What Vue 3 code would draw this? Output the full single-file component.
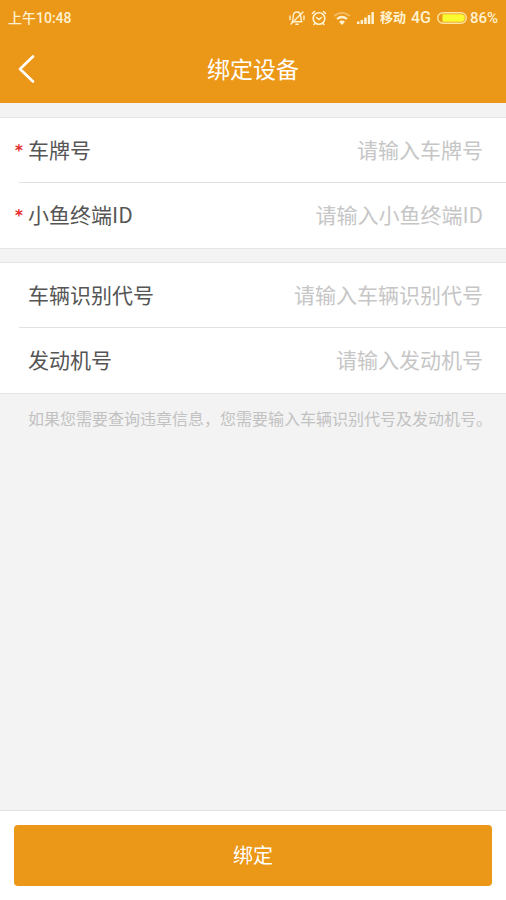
<script setup>
import { reactive } from 'vue'

const groups = [
  [
    { id: 'plate', label: '车牌号', required: true },
    { id: 'terminal', label: '小鱼终端ID', required: true }
  ],
  [
    { id: 'vin', label: '车辆识别代号', required: false },
    { id: 'engine', label: '发动机号', required: false }
  ]
]

const form = reactive({ plate: '', terminal: '', vin: '', engine: '' })
</script>

<template>
  <form class="page" @submit.prevent>
    <header class="header">
      <div class="status">
        <span class="time">上午10:48</span>
        <div class="indicators">
          <svg class="icon" width="16" height="16" viewBox="0 0 16 16" fill="none" stroke="currentColor" stroke-width="1.400" stroke-linecap="round" stroke-linejoin="round" aria-hidden="true">
            <path d="M3 11.800h10c-1-1-1.200-2-1.200-5C11.800 4 10.200 2 8 2S4.200 4 4.200 6.800c0 3-.2 4-1.200 5z" />
            <path d="M6.800 14.200h2.400M14 2L2 14M1 6v3.500M15 6v3.500" />
          </svg>
          <svg class="icon" width="16" height="16" viewBox="0 0 16 16" fill="none" stroke="currentColor" stroke-width="1.600" stroke-linecap="round" aria-hidden="true">
            <circle cx="8" cy="8.500" r="5.800" />
            <path d="M5.500 7.500L8 9.500l2.500-2" />
            <path d="M1.500 3.500l2-2M14.500 3.500l-2-2M4 13.500l-1 1M12 13.500l1 1" />
          </svg>
          <svg class="icon" width="18" height="14" viewBox="0 0 18 14" fill="none" stroke="currentColor" aria-hidden="true">
            <path d="M1.200 5Q9-1.500 16.800 5" stroke-width="2" opacity=".4" />
            <path d="M4 8Q9 4 14 8" stroke-width="2.200" />
            <path d="M6 10.700Q9 8.300 12 10.700L9 14z" fill="currentColor" stroke="none" />
          </svg>
          <svg class="icon" width="17" height="12" viewBox="0 0 17 12" fill="currentColor" aria-hidden="true">
            <path d="M0 9.500h2.500V12H0zM3.600 8h2.500v4H3.600zM7.200 5.500h2.500V12H7.200zM10.800 3h2.500v9h-2.500zM14.400 0h2.500v12h-2.500z" />
          </svg>
          <span class="carrier">移动<span class="latin">4G</span></span>
          <svg class="icon" width="30" height="12" viewBox="0 0 30 12" aria-hidden="true">
            <rect x=".7" y=".7" width="28.600" height="10.600" rx="5.300" fill="none" stroke="#ffe5a0" stroke-width="1.400" />
            <path d="M5.500 2.200H24a3.800 3.800 0 0 1 0 7.600H5.500z" fill="#fbfb32" />
          </svg>
          <span class="percent">86%</span>
        </div>
      </div>
      <nav class="bar">
        <button class="back" type="button" aria-label="返回">
          <svg width="18" height="28" viewBox="0 0 18 28" fill="none" stroke="currentColor" stroke-width="2.600" stroke-linecap="round" stroke-linejoin="round" aria-hidden="true">
            <path d="M15 1.500L2 14l13 12.500" />
          </svg>
        </button>
        <h1 class="title">绑定设备</h1>
      </nav>
    </header>

    <main class="content">
      <section v-for="(group, g) in groups" :key="g" class="group">
        <template v-for="(field, i) in group" :key="field.id">
          <hr v-if="i > 0" class="divider" />
          <div class="row">
            <span class="mark">{{ field.required ? '*' : '' }}</span>
            <label class="label" :for="field.id">{{ field.label }}</label>
            <input
              :id="field.id"
              v-model="form[field.id]"
              class="input"
              type="text"
              :required="field.required"
              :placeholder="'请输入' + field.label"
            />
          </div>
        </template>
      </section>
      <p class="hint">如果您需要查询违章信息，您需要输入车辆识别代号及发动机号。</p>
    </main>

    <footer class="footer">
      <button class="submit" type="submit">绑定</button>
    </footer>
  </form>
</template>

<style>
body {
  margin: 0;
}
</style>

<style scoped>
.page {
  display: flex;
  flex-direction: column;
  min-height: 100vh;
  background: #f3f3f3;
  color: #555;
  font-family: "Noto Sans CJK SC", sans-serif;
}

.header {
  background: #eb9717;
  color: #fff;
}

.status {
  display: flex;
  align-items: center;
  justify-content: space-between;
  height: 36px;
  padding: 0 8px;
  color: #fff2d0;
  font-family: Roboto, "Noto Sans CJK SC", sans-serif;
  font-size: 14px;
  font-weight: 500;
  line-height: 20px;
}

.indicators {
  display: flex;
  align-items: center;
  gap: 6px;
}

.icon {
  display: block;
  flex: none;
}

.carrier {
  display: flex;
  align-items: center;
  gap: 5px;
  font-size: 13px;
  font-weight: 700;
}

.latin {
  font-size: 16px;
  font-weight: 500;
}

.percent {
  margin-left: -3px;
  font-size: 15px;
}

.bar {
  display: grid;
  grid-template-columns: 56px 1fr 56px;
  align-items: center;
  height: 67px;
}

.back {
  display: flex;
  align-items: center;
  height: 48px;
  padding: 0 18px 2px;
  border: 0;
  background: none;
  color: inherit;
}

.title {
  margin: 0;
  padding-bottom: 4px;
  font-size: 23px;
  font-weight: 400;
  line-height: 32px;
  text-align: center;
}

.content {
  display: flow-root;
  flex: 1;
}

.group {
  margin-top: 13px;
  border-top: 1px solid #e6e6e6;
  border-bottom: 1px solid #e6e6e6;
  background: #fff;
}

.group:first-child {
  margin-top: 14px;
}

.row {
  display: flex;
  align-items: center;
  box-sizing: border-box;
  height: 65px;
  padding: 0 23px 4px 15px;
}

.divider {
  height: 1px;
  margin: -1px 0 0 19px;
  border: 0;
  background: #e2e2e2;
}

.mark {
  flex: none;
  width: 13px;
  padding-top: 4px;
  color: #e32b2b;
  font-family: "DejaVu Sans", sans-serif;
  font-size: 15px;
  font-weight: 700;
  line-height: 20px;
}

.label {
  flex: none;
  font-size: 21px;
  line-height: 30px;
}

.input {
  flex: 1;
  min-width: 0;
  height: 40px;
  padding: 0;
  border: 0;
  outline: 0;
  background: none;
  color: #555;
  font-family: inherit;
  font-size: 21px;
  text-align: right;
}

.input::placeholder {
  color: #c6c6c6;
  opacity: 1;
}

.hint {
  margin: 0;
  padding: 12px 8px 12px 28px;
  color: #c2c2c2;
  font-size: 16px;
  line-height: 24px;
}

.footer {
  padding: 14px;
  border-top: 1px solid #e2e2e2;
  background: #fff;
}

.submit {
  display: block;
  width: 100%;
  height: 61px;
  padding: 0 0 2px;
  border: 0;
  border-radius: 4px;
  background: #eb9717;
  color: #fff;
  font-family: inherit;
  font-size: 20px;
}
</style>
